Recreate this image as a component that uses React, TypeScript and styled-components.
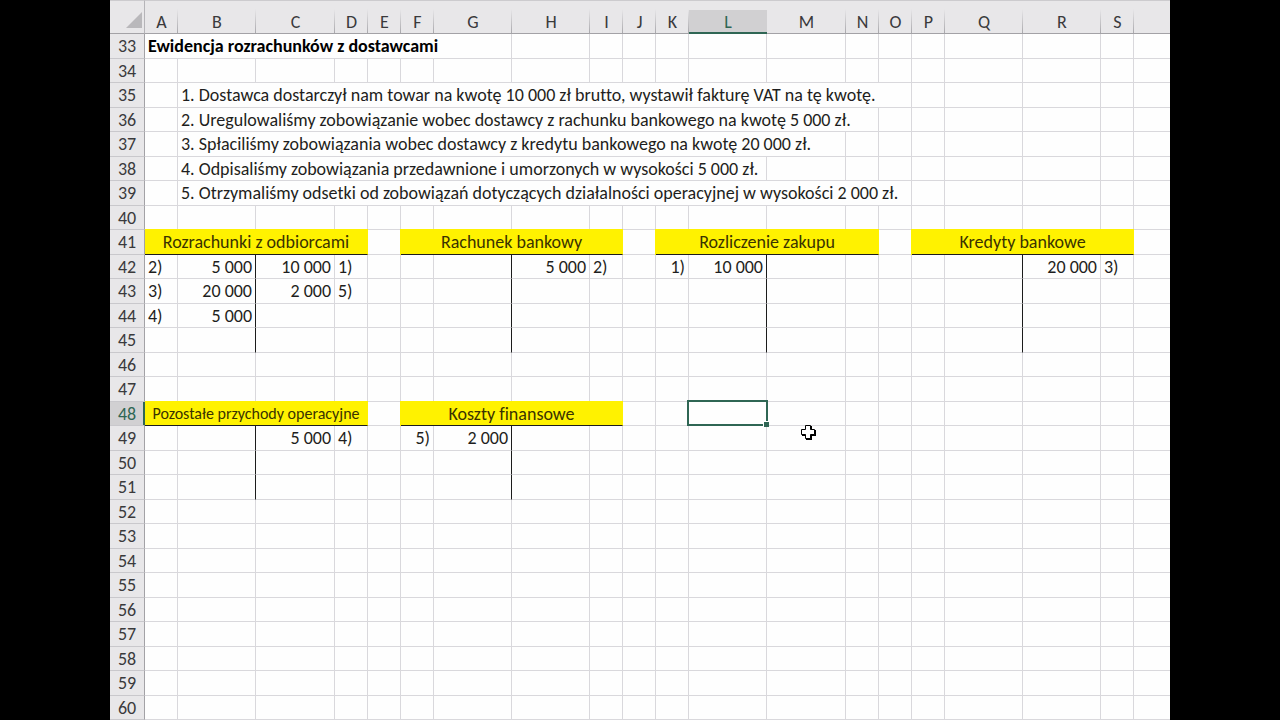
import React from "react";
import styled, { createGlobalStyle, css } from "styled-components";

const YELLOW = "#fff200";
const GRID = "#d9d8dc";
const INK = "#1e1e20";
const GREEN = "#2f6654";

const GlobalStyle = createGlobalStyle`
  *, *::before, *::after { box-sizing: border-box; }
  body {
    margin: 0;
    background: #000;
    font-family: Carlito, Lato, "Open Sans", sans-serif;
    font-variant-ligatures: none;
    color: ${INK};
  }
`;

const Page = styled.main`
  min-height: 100vh;
  padding: 0 110px;
  background: #000;
`;

const Sheet = styled.table`
  width: 100%;
  table-layout: fixed;
  border-collapse: separate;
  border-spacing: 0;
  background: #fefefe;
  font-size: 18px;
  line-height: 22px;
`;

const Col = styled.col<{ $w?: number }>`
  width: ${(p) => (p.$w ? `${p.$w}px` : "auto")};
`;

const HeadRow = styled.tr`
  height: 34px;
`;

const Row = styled.tr`
  height: 24px;

  &:nth-child(odd) {
    height: 25px;
  }
`;

const Corner = styled.td`
  padding: 5px 2px 0 0;
  background: #e8e7e9;
  border-top: 1px solid #cccbce;
  border-right: 1px solid #b5b4b8;
  border-bottom: 1px solid #a3a2a6;

  svg {
    display: block;
    margin-left: auto;
  }
`;

const ColumnHead = styled.th<{ $active?: boolean }>`
  padding: 9px 0 0;
  font-weight: 400;
  color: #3a3a3c;
  border-top: 1px solid #cccbce;
  border-bottom: 1px solid #a3a2a6;
  background: linear-gradient(#e8e7e9, #a9a8ac) right bottom / 1px 24px no-repeat,
    #e8e7e9;

  &:last-child {
    background: #e8e7e9;
  }

  ${(p) =>
    p.$active &&
    css`
      color: ${GREEN};
      box-shadow: inset 0 -1px ${GREEN};
      border-bottom-color: ${GREEN};
      background: linear-gradient(#d1d0d2, #d1d0d2) left bottom / 100% 23px no-repeat,
        #e8e7e9;
    `}
`;

const RowHead = styled.th<{ $active?: boolean }>`
  position: relative;
  z-index: 1;
  padding: 0;
  font-weight: 400;
  color: #3a3a3c;
  background: #e8e7e9;
  border-right: 1px solid #a3a2a6;
  border-bottom: 1px solid #c9c8cc;

  ${(p) =>
    p.$active &&
    css`
      color: ${GREEN};
      background: #d1d0d2;
      box-shadow: inset -1px 0 ${GREEN};
      border-right-color: ${GREEN};
    `}
`;

type Align = "left" | "right" | "center";

const Cell = styled.td<{ $align?: Align; $stem?: boolean; $bold?: boolean }>`
  position: relative;
  padding: 0 3px;
  text-align: ${(p) => p.$align ?? "left"};
  font-weight: ${(p) => (p.$bold ? 700 : 400)};
  color: ${(p) => (p.$bold ? "#000" : INK)};
  white-space: nowrap;
  border-right: 1px solid ${(p) => (p.$stem ? "#1c1c1c" : GRID)};
  border-bottom: 1px solid ${GRID};

  &:last-child {
    border-right: 0;
  }
`;

const AccountTitle = styled.td<{ $small?: boolean }>`
  position: relative;
  padding: 0;
  text-align: center;
  white-space: nowrap;
  font-size: ${(p) => (p.$small ? 16 : 18)}px;
  color: #3a3200;
  background: ${YELLOW};
  border-right: 1px solid ${YELLOW};
  border-bottom: 1px solid #1c1c1c;
  box-shadow: -1px 0 ${YELLOW}, 0 -1px ${YELLOW}, -1px -1px ${YELLOW};
`;

const Selection = styled.div`
  position: absolute;
  z-index: 2;
  inset: -2px -2px -1px -2px;
  border: 2px solid ${GREEN};

  &::after {
    content: "";
    position: absolute;
    right: -3px;
    bottom: -3px;
    width: 6px;
    height: 6px;
    background: ${GREEN};
    border-top: 1px solid #fff;
    border-left: 1px solid #fff;
  }
`;

const Pointer = styled.svg`
  position: absolute;
  z-index: 3;
  left: 33px;
  top: -3px;
`;

const columns: [string, number][] = [
  ["A", 33], ["B", 78], ["C", 79], ["D", 33], ["E", 33],
  ["F", 33], ["G", 78], ["H", 78], ["I", 33], ["J", 33],
  ["K", 33], ["L", 78], ["M", 79], ["N", 33], ["O", 33],
  ["P", 33], ["Q", 78], ["R", 78], ["S", 33],
];

interface Entry {
  text: string;
  span?: number;
  align?: Align;
  kind?: "title" | "smallTitle" | "bold";
}

const right = (text: string): Entry => ({ text, align: "right" });
const title = (text: string): Entry => ({ text, span: 4, kind: "title" });

const entries: Record<string, Entry> = {
  A33: { text: "Ewidencja rozrachunków z dostawcami", span: 7, kind: "bold" },
  B35: { text: "1. Dostawca dostarczył nam towar na kwotę 10 000 zł brutto, wystawił fakturę VAT na tę kwotę.", span: 14 },
  B36: { text: "2. Uregulowaliśmy zobowiązanie wobec dostawcy z rachunku bankowego na kwotę 5 000 zł.", span: 13 },
  B37: { text: "3. Spłaciliśmy zobowiązania wobec dostawcy z kredytu bankowego na kwotę 20 000 zł.", span: 12 },
  B38: { text: "4. Odpisaliśmy zobowiązania przedawnione i umorzonych w wysokości 5 000 zł.", span: 11 },
  B39: { text: "5. Otrzymaliśmy odsetki od zobowiązań dotyczących działalności operacyjnej w wysokości 2 000 zł.", span: 14 },
  A41: title("Rozrachunki z odbiorcami"),
  F41: title("Rachunek bankowy"),
  K41: title("Rozliczenie zakupu"),
  P41: title("Kredyty bankowe"),
  A42: { text: "2)" },
  B42: right("5 000"),
  C42: right("10 000"),
  D42: { text: "1)" },
  H42: right("5 000"),
  I42: { text: "2)" },
  K42: right("1)"),
  L42: right("10 000"),
  R42: right("20 000"),
  S42: { text: "3)" },
  A43: { text: "3)" },
  B43: right("20 000"),
  C43: right("2 000"),
  D43: { text: "5)" },
  A44: { text: "4)" },
  B44: right("5 000"),
  A48: { text: "Pozostałe przychody operacyjne", span: 4, kind: "smallTitle" },
  F48: title("Koszty finansowe"),
  C49: right("5 000"),
  D49: { text: "4)" },
  F49: right("5)"),
  G49: right("2 000"),
};

// Vertical stems of the T-accounts: column, first row, last row.
const stems: [string, number, number][] = [
  ["B", 42, 45], ["G", 42, 45], ["L", 42, 45], ["Q", 42, 45],
  ["B", 49, 51], ["G", 49, 51],
];

const hasStem = (col: string, row: number) =>
  stems.some(([c, from, to]) => c === col && row >= from && row <= to);

const rows = Array.from({ length: 28 }, (_, i) => 33 + i);
const ACTIVE = { col: "L", row: 48 };

function CrossPointer() {
  return (
    <Pointer width="18" height="18" viewBox="0 0 18 18" aria-hidden="true">
      <path d="M6 3h6v4h4v6h-4v4H6v-4H2V7h4z" fill="#000" />
      <path d="M5.5 2.5h5v4h4v5h-4v4h-5v-4h-4v-5h4z" fill="#fff" stroke="#000" />
    </Pointer>
  );
}

function renderCells(row: number) {
  const cells: React.ReactNode[] = [];
  for (let i = 0; i < columns.length; ) {
    const col = columns[i][0];
    const id = `${col}${row}`;
    const entry = entries[id];
    const span = entry?.span ?? 1;
    if (entry?.kind === "title" || entry?.kind === "smallTitle") {
      cells.push(
        <AccountTitle key={id} colSpan={span} $small={entry.kind === "smallTitle"}>
          {entry.text}
        </AccountTitle>
      );
    } else {
      cells.push(
        <Cell
          key={id}
          colSpan={span}
          $align={entry?.align}
          $bold={entry?.kind === "bold"}
          $stem={hasStem(col, row)}
        >
          {entry?.text}
          {col === ACTIVE.col && row === ACTIVE.row && <Selection />}
          {id === "M49" && <CrossPointer />}
        </Cell>
      );
    }
    i += span;
  }
  return cells;
}

export default function App() {
  return (
    <>
      <GlobalStyle />
      <Page>
        <Sheet>
          <colgroup>
            <Col $w={35} />
            {columns.map(([name, w]) => (
              <Col key={name} $w={w} />
            ))}
            <Col />
          </colgroup>
          <thead>
            <HeadRow>
              <Corner>
                <svg width="16" height="16" viewBox="0 0 16 16" aria-hidden="true">
                  <path d="M16 0v16H0z" fill="#b9b8bb" />
                </svg>
              </Corner>
              {columns.map(([name]) => (
                <ColumnHead key={name} scope="col" $active={name === ACTIVE.col}>
                  {name}
                </ColumnHead>
              ))}
              <ColumnHead as="td" />
            </HeadRow>
          </thead>
          <tbody>
            {rows.map((row) => (
              <Row key={row}>
                <RowHead scope="row" $active={row === ACTIVE.row}>
                  {row}
                </RowHead>
                {renderCells(row)}
                <Cell />
              </Row>
            ))}
          </tbody>
        </Sheet>
      </Page>
    </>
  );
}
